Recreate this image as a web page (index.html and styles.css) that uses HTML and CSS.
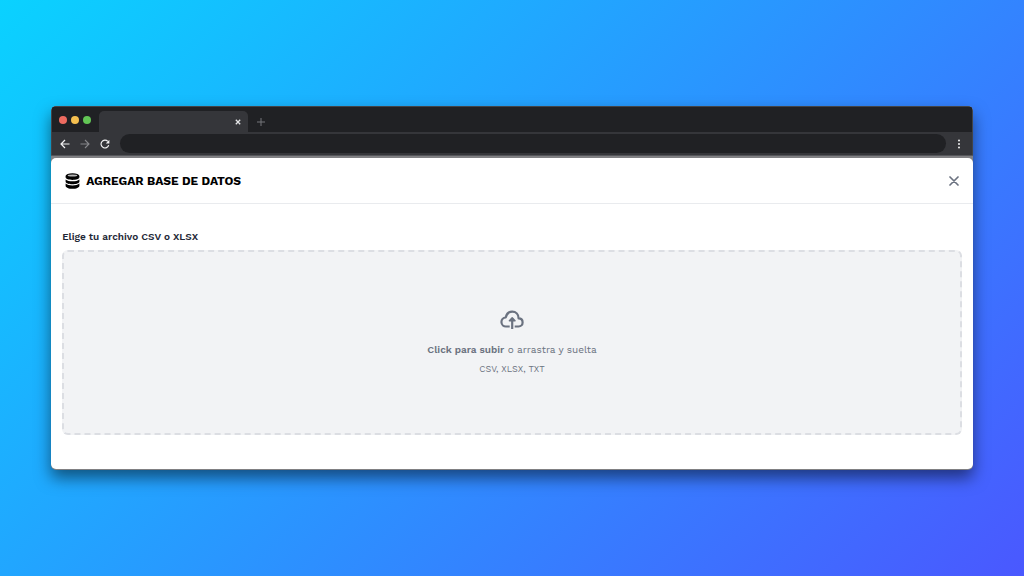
FILE: index.html
```
<!DOCTYPE html>
<html lang="es">
<head>
<meta charset="utf-8">
<meta name="viewport" content="width=device-width, initial-scale=1">
<title>Agregar base de datos</title>
<link rel="stylesheet" href="styles.css">
</head>
<body>
<main class="window">
  <header class="chrome">
    <div class="tab-strip">
      <div class="lights"><span class="light red"></span><span class="light yellow"></span><span class="light green"></span></div>
      <div class="tab">
        <button class="chrome-button" type="button" aria-label="Cerrar pestaña"><svg width="6" height="6" viewBox="0 0 6 6"><path d="M.8.8l4.4 4.4M5.2.8.8 5.2" stroke="#e4e5e7" stroke-width="1.3"/></svg></button>
      </div>
      <button class="chrome-button new-tab" type="button" aria-label="Nueva pestaña"><svg width="8" height="8" viewBox="0 0 8 8"><path d="M4 0v8M0 4h8" stroke="#75767a" stroke-width="1"/></svg></button>
    </div>
    <div class="toolbar">
      <button class="chrome-button" type="button" aria-label="Atrás"><svg width="10" height="10" viewBox="0 0 10 10"><path d="M9.500 5H1.200M5 1 1 5l4 4" fill="none" stroke="#f1f1f2" stroke-width="1.200"/></svg></button>
      <button class="chrome-button" type="button" aria-label="Adelante"><svg width="10" height="10" viewBox="0 0 10 10"><path d="M.5 5h8.300M5 1l4 4-4 4" fill="none" stroke="#85868a" stroke-width="1.100"/></svg></button>
      <button class="chrome-button" type="button" aria-label="Recargar"><svg width="10" height="10" viewBox="0 0 10 10"><path d="M8.700 6.200A3.900 3.900 0 1 1 7.800 2.400" fill="none" stroke="#f1f1f2" stroke-width="1.200"/><path d="M9.400.8v3.600H5.800z" fill="#f1f1f2"/></svg></button>
      <input class="address" type="text" aria-label="Dirección">
      <button class="chrome-button menu" type="button" aria-label="Menú"><svg width="4" height="10" viewBox="0 0 4 10" fill="#f1f1f2"><circle cx="2" cy="1.500" r="1"/><circle cx="2" cy="5" r="1"/><circle cx="2" cy="8.500" r="1"/></svg></button>
    </div>
  </header>
  <div class="backdrop">
    <section class="dialog" aria-labelledby="dialog-title">
      <div class="dialog-header">
        <svg class="database" width="15" height="16" viewBox="0 0 15 16"><ellipse cx="7.500" cy="3.100" rx="6.900" ry="2.900"/><ellipse cx="7.500" cy="2.500" rx="4.800" ry="1.100" fill="#b5b5b5"/><path d="M.6 3.100c1 3.200 12.800 3.200 13.800 0v1.200c0 3.500-13.800 3.500-13.800 0zM.6 6.400c2.600 2.600 11.200 2.600 13.800 0v2c0 3.700-13.800 3.700-13.800 0zM.6 10.500c2.600 2.600 11.200 2.600 13.800 0v2.200c0 4.100-13.800 4.100-13.800 0z"/></svg>
        <h1 class="title" id="dialog-title">AGREGAR BASE DE DATOS</h1>
        <button class="close" type="button" aria-label="Cerrar"><svg width="10" height="10" viewBox="0 0 10 10"><path d="m1 1 8 8M9 1 1 9" stroke="#6b7280" stroke-width="1.700" stroke-linecap="round"/></svg></button>
      </div>
      <div class="dialog-body">
        <label class="field-label" for="file">Elige tu archivo CSV o XLSX</label>
        <label class="dropzone" for="file">
          <svg class="cloud" width="24" height="20" viewBox="0 0 24 20" fill="none" stroke="#6b7280" stroke-width="2.200" stroke-linecap="butt" stroke-linejoin="round"><path d="M9.700 16.500H6.200a4.500 4.500 0 0 1-.5-9C6.500 4.100 8.900 1.700 12.200 1.700c3.700 0 6.400 2.800 6.400 6.700 2.500 0 4 1.800 4 4 0 2.400-1.700 4.100-4 4.100h-3.900"/><path d="M12.200 19V8"/><path d="m9.400 10.700 2.800-2.800 2.800 2.800z" fill="#6b7280" stroke-width="1.500"/></svg>
          <span class="prompt"><strong>Click para subir</strong> o arrastra y suelta</span>
          <span class="formats">CSV, XLSX, TXT</span>
        </label>
        <input class="file-input" id="file" type="file" accept=".csv,.xlsx,.txt">
      </div>
    </section>
  </div>
</main>
</body>
</html>
```
FILE: styles.css
```
* { box-sizing: border-box; }

body {
  margin: 0;
  min-height: 100vh;
  display: flex;
  align-items: center;
  justify-content: center;
  background: linear-gradient(135deg, #0ad2ff, #4a58ff);
  font-family: "Work Sans", Inter, "Liberation Sans", sans-serif;
}

button { padding: 0; border: 0; background: none; cursor: pointer; }
svg { display: block; }

.window {
  width: 90%;
  overflow: hidden;
  border-radius: 5px;
  background: #808083;
  box-shadow: 0 8px 16px rgba(0, 0, 0, .5);
}

.chrome {
  background: #35363a;
  border: 1px solid #424448;
  border-bottom: 0;
  border-radius: 5px 5px 0 0;
}

.tab-strip {
  display: flex;
  height: 25px;
  background: #202124;
}

.lights {
  display: flex;
  gap: 4px;
  width: 47px;
  padding: 9px 0 0 7px;
}

.light { width: 8px; height: 8px; border-radius: 50%; }
.red { background: #ed6b60; }
.yellow { background: #f5bf4f; }
.green { background: #62c655; }

.tab {
  display: flex;
  align-items: center;
  justify-content: flex-end;
  width: 149px;
  margin-top: 4px;
  padding-right: 7px;
  border-radius: 5px 5px 0 0;
  background: #35363a;
}

.chrome-button { display: grid; place-items: center; }
.new-tab { width: 26px; padding-top: 4px; }

.toolbar {
  display: flex;
  align-items: center;
  gap: 10px;
  height: 23px;
  padding: 0 10px 0 8px;
}

.address {
  flex: 1;
  min-width: 0;
  height: 19px;
  padding: 0 10px;
  border: 0;
  border-radius: 10px;
  background: #202124;
  color: #fff;
}

.menu { width: 6px; }

.backdrop {
  padding: 2px 0 1px;
  border-top: 1px solid #55565a;
}

.dialog { border-radius: 5px; background: #fff; }

.dialog-header {
  display: flex;
  align-items: center;
  gap: 6px;
  height: 46px;
  padding: 0 14px;
  border-bottom: 1px solid #e9ebee;
}

.title {
  flex: 1;
  margin: 0;
  color: #000;
  font-size: 12px;
  line-height: 16px;
  font-weight: 700;
}

.dialog-body { padding: 25px 11px 34px; }

.field-label {
  display: block;
  margin-bottom: 6px;
  color: #1f2937;
  font-size: 10px;
  line-height: 15px;
  font-weight: 600;
}

.dropzone {
  display: flex;
  flex-direction: column;
  align-items: center;
  padding: 58px 16px;
  border: 2px dashed #dcdee3;
  border-radius: 6px;
  background: #f2f3f5;
  color: #6b7280;
  cursor: pointer;
}

.cloud { margin-bottom: 13px; }
.prompt { margin-bottom: 6px; font-size: 10px; line-height: 14px; }
.prompt strong { font-weight: 600; }
.formats { font-size: 9px; line-height: 12px; }

.file-input {
  position: absolute;
  width: 1px;
  height: 1px;
  opacity: 0;
}
```
